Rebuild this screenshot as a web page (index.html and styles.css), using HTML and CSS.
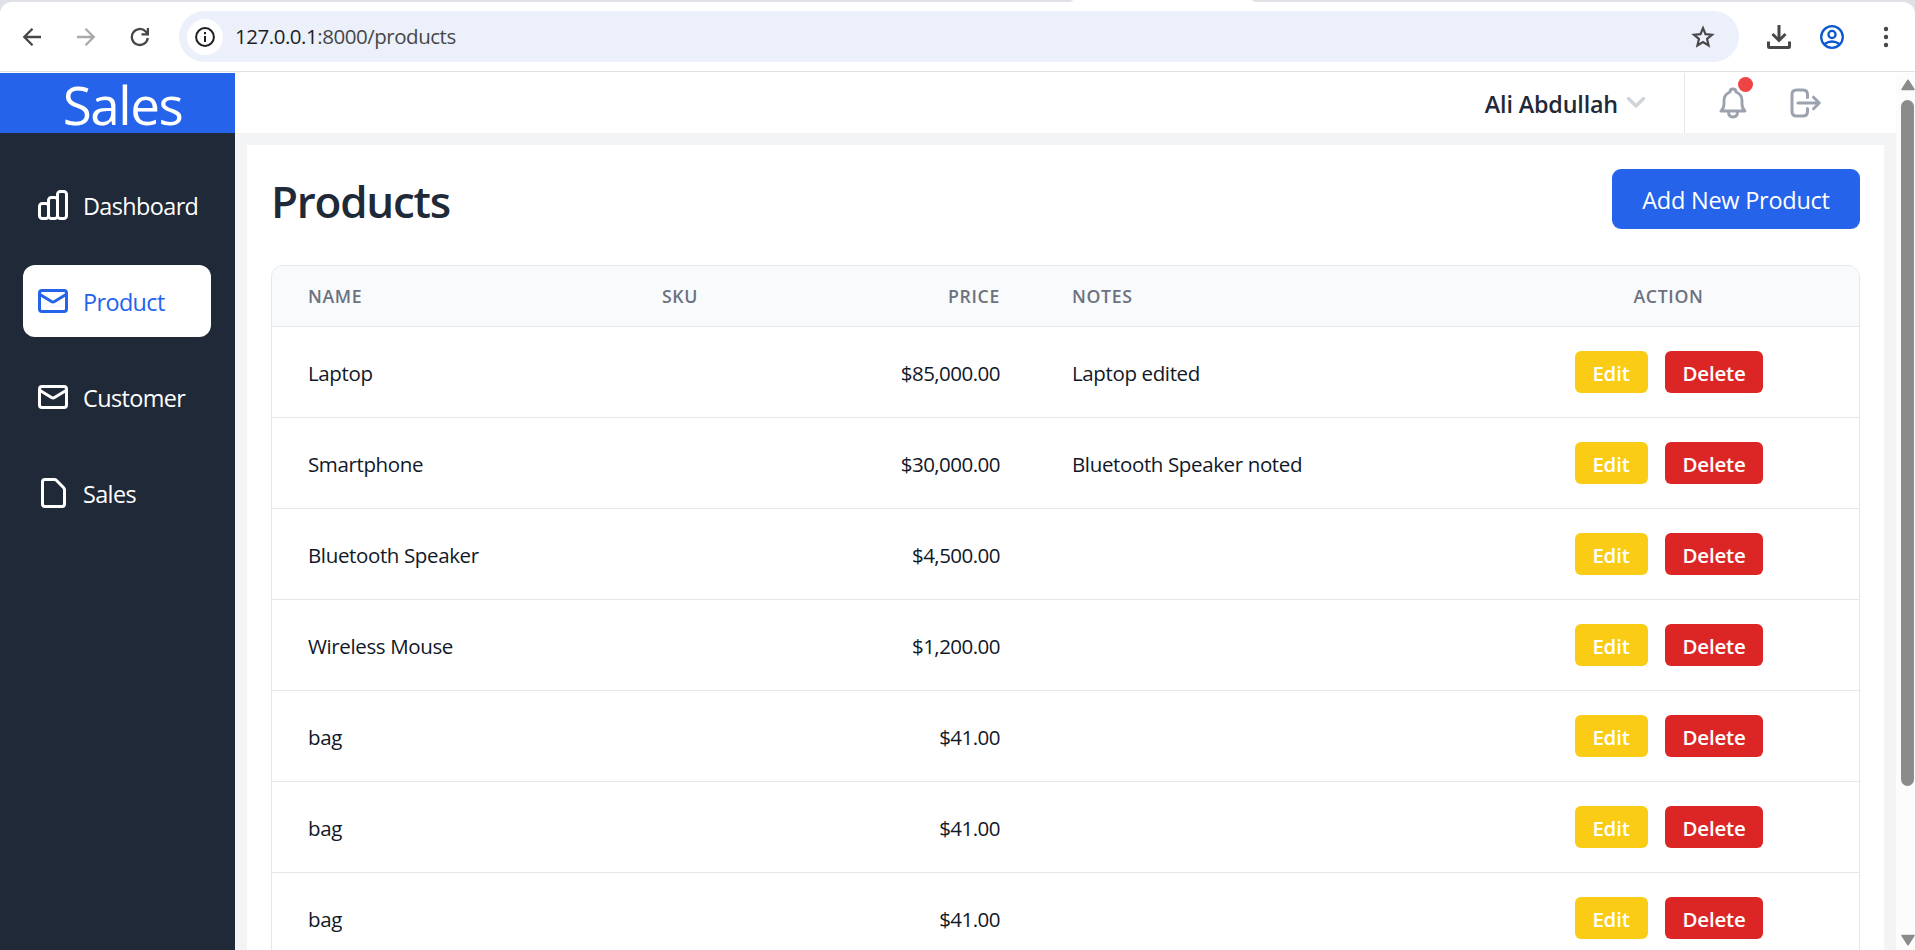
FILE: index.html
```html
<!DOCTYPE html>
<html lang="en">
<head>
<meta charset="utf-8">
<title>Products</title>
<link rel="stylesheet" href="styles.css">
</head>
<body>
<div class="browser">
  <div class="tab-strip"><span class="strip-left"></span><span class="strip-right"></span></div>
  <div class="toolbar">
    <svg class="nav-icon" width="20" height="20" viewBox="0 0 20 20"><path d="M19 10H2.500M10.500 1.800L2.300 10l8.200 8.200" fill="none" stroke="#474747" stroke-width="2.300"/></svg>
    <svg class="nav-icon" width="20" height="20" viewBox="0 0 20 20"><path d="M1 10h16.500M9.500 1.800l8.200 8.200-8.200 8.200" fill="none" stroke="#a9a9a9" stroke-width="2.300"/></svg>
    <svg class="nav-icon" width="20" height="20" viewBox="0 0 20 20"><path d="M17.800 11a8 8 0 1 1-2.300-6.700L17.800 7" fill="none" stroke="#474747" stroke-width="2.300"/><path d="M19 1v7.500h-7.500V6.300h5.300V1z" fill="#474747"/></svg>
    <div class="address">
      <span class="site-info"><svg width="20" height="20" viewBox="0 0 20 20"><circle cx="10" cy="10" r="8.900" fill="none" stroke="#1f1f1f" stroke-width="2"/><path d="M9 9h2v6H9zM9 5h2v2.200H9z" fill="#1f1f1f"/></svg></span>
      <span class="url"><b>127.0.0.1</b>:8000/products</span>
      <svg class="star" width="24" height="24" viewBox="0 0 24 24"><path d="M12 3.200l2.500 6 6.500.55-4.950 4.250 1.500 6.350L12 17l-5.550 3.350 1.500-6.350L3 9.750l6.500-.55z" fill="none" stroke="#474747" stroke-width="2.200"/></svg>
    </div>
    <svg class="download" width="24" height="24" viewBox="0 0 24 24"><path d="M12 0v15M5.500 9l6.500 6.500L18.500 9" fill="none" stroke="#474747" stroke-width="3"/><path d="M1.500 16.500v5q0 1 1 1h19q1 0 1-1v-5" fill="none" stroke="#474747" stroke-width="3"/></svg>
    <svg class="profile" width="24" height="24" viewBox="0 0 24 24"><g fill="none" stroke="#0b57d0" stroke-width="2.300"><circle cx="12" cy="12" r="10.800"/><circle cx="12" cy="9.500" r="3.600"/><path d="M4.500 19q7.500-5 15 0"/></g></svg>
    <svg class="menu" width="6" height="24" viewBox="0 0 6 24"><g fill="#474747"><circle cx="3" cy="4" r="2.200"/><circle cx="3" cy="12" r="2.200"/><circle cx="3" cy="20" r="2.200"/></g></svg>
  </div>
</div>

<div class="app">
  <aside class="sidebar">
    <div class="brand">Sales</div>
    <nav class="nav">
      <a class="nav-item"><svg class="icon" width="30" height="30" viewBox="0 0 30 30"><rect x="1.500" y="13.500" width="9" height="15" rx="2.800"/><rect x="10.500" y="7.500" width="9" height="21" rx="2.800"/><rect x="19.500" y="1.500" width="9" height="27" rx="2.800"/></svg><span>Dashboard</span></a>
      <a class="nav-item active"><svg class="icon" width="30" height="30" viewBox="0 0 30 30"><rect x="1.500" y="4.500" width="27" height="21" rx="2.500"/><path d="M2 8.500l11.500 7q1.500.9 3 0L28 8.500"/></svg><span>Product</span></a>
      <a class="nav-item"><svg class="icon" width="30" height="30" viewBox="0 0 30 30"><rect x="1.500" y="4.500" width="27" height="21" rx="2.500"/><path d="M2 8.500l11.500 7q1.500.9 3 0L28 8.500"/></svg><span>Customer</span></a>
      <a class="nav-item"><svg class="icon" width="30" height="30" viewBox="0 0 30 30"><path d="M7 1.500h9.300q1.200 0 2 .8l7.400 7.400q.8.800.8 2V26q0 2.500-2.500 2.500H7q-2.500 0-2.500-2.500V4Q4.500 1.500 7 1.500z"/></svg><span>Sales</span></a>
    </nav>
  </aside>

  <div class="content">
    <header class="topbar">
      <span class="user">Ali Abdullah</span>
      <svg class="chevron" width="20" height="14" viewBox="0 0 20 14"><path d="M2.500 2.500l7.500 7.500 7.500-7.500" fill="none" stroke="#d1d5db" stroke-width="3.400" stroke-linecap="round" stroke-linejoin="round"/></svg>
      <div class="actions">
        <span class="bell">
          <svg width="28" height="32" viewBox="0 0 28 32"><g fill="none" stroke="#9ca3af" stroke-width="2.900" stroke-linecap="round" stroke-linejoin="round"><path d="M2 24h24q-3-2.500-3-7v-3.500q0-6-6-8.500Q17 2 14 2t-3 3q-6 2.500-6 8.500V17q0 4.500-3 7z"/><path d="M9.500 24.500q0 5.500 4.500 5.500t4.500-5.500"/></g></svg>
          <i class="dot"></i>
        </span>
        <svg width="32" height="30" viewBox="0 0 32 30"><g fill="none" stroke="#9ca3af" stroke-width="3" stroke-linecap="round" stroke-linejoin="round"><path d="M17.500 9.500V6.500q0-4.500-4.500-4.500H6.500Q2 2 2 6.500v17Q2 28 6.500 28H13q4.500 0 4.500-4.500v-3M8 15h21M23.500 9.200l5.800 5.800-5.800 5.800"/></g></svg>
      </div>
    </header>

    <main class="card">
      <div class="card-head">
        <h1>Products</h1>
        <button class="add">Add New Product</button>
      </div>
      <div class="table">
        <div class="row head"><span>NAME</span><span>SKU</span><span class="price">PRICE</span><span>NOTES</span><span class="act">ACTION</span></div>
        <div class="row"><span>Laptop</span><span></span><span class="price">$85,000.00</span><span>Laptop edited</span><span class="act"><button class="edit">Edit</button><button class="delete">Delete</button></span></div>
        <div class="row"><span>Smartphone</span><span></span><span class="price">$30,000.00</span><span>Bluetooth Speaker noted</span><span class="act"><button class="edit">Edit</button><button class="delete">Delete</button></span></div>
        <div class="row"><span>Bluetooth Speaker</span><span></span><span class="price">$4,500.00</span><span></span><span class="act"><button class="edit">Edit</button><button class="delete">Delete</button></span></div>
        <div class="row"><span>Wireless Mouse</span><span></span><span class="price">$1,200.00</span><span></span><span class="act"><button class="edit">Edit</button><button class="delete">Delete</button></span></div>
        <div class="row"><span>bag</span><span></span><span class="price">$41.00</span><span></span><span class="act"><button class="edit">Edit</button><button class="delete">Delete</button></span></div>
        <div class="row"><span>bag</span><span></span><span class="price">$41.00</span><span></span><span class="act"><button class="edit">Edit</button><button class="delete">Delete</button></span></div>
        <div class="row"><span>bag</span><span></span><span class="price">$41.00</span><span></span><span class="act"><button class="edit">Edit</button><button class="delete">Delete</button></span></div>
      </div>
    </main>
  </div>

  <div class="scrollbar">
    <svg width="14" height="12" viewBox="0 0 14 12"><path d="M7 1.200L13 10.500H1z" fill="#8b8b8b" stroke="#8b8b8b" stroke-width="1.500" stroke-linejoin="round"/></svg>
    <div class="thumb"></div>
    <svg class="down" width="14" height="12" viewBox="0 0 14 12"><path d="M7 10.800L13 1.500H1z" fill="#8b8b8b" stroke="#8b8b8b" stroke-width="1.500" stroke-linejoin="round"/></svg>
  </div>
</div>
</body>
</html>
```
FILE: styles.css
```css
* { box-sizing: border-box; }

body {
  margin: 0;
  height: 950px;
  overflow: hidden;
  font-family: "Open Sans", "Noto Sans", sans-serif;
  font-size: 20.500px;
  letter-spacing: -0.370px;
  color: #111827;
  background: #fff;
}

button { border: 0; font: inherit; color: #fff; padding: 2px 0 0; }
svg { display: block; flex: none; }

/* Browser toolbar */
.browser { height: 73px; background: linear-gradient(#dee1e6 0 12px, #fff 12px); }
.tab-strip { height: 2px; display: flex; justify-content: space-between; background: #fff; }
.strip-left { width: 1073px; background: #dee1e6; border-bottom-right-radius: 6px 2px; }
.strip-right { width: 663px; background: #dee1e6; border-bottom-left-radius: 6px 2px; }
.toolbar {
  height: 70px;
  display: flex;
  align-items: center;
  padding-left: 22px;
  background: #fff;
  border-bottom: 1px solid #dfe1e5;
  border-radius: 12px 12px 0 0;
}
.nav-icon { margin-right: 34px; }
.nav-icon + .nav-icon + .nav-icon { margin-right: 29px; }
.address {
  width: 1560px;
  height: 51px;
  display: flex;
  align-items: center;
  padding: 0 24px 0 8px;
  border-radius: 26px;
  background: #ebf0fa;
}
.site-info {
  width: 36px;
  height: 36px;
  display: grid;
  place-items: center;
  border-radius: 50%;
  background: #fff;
}
.url { margin-left: 12px; padding-bottom: 2px; letter-spacing: -0.470px; color: #474747; }
.url b { font-weight: 400; color: #1f1f1f; }
.star { margin-left: auto; }
.download { margin-left: 28px; }
.profile { margin-left: 29px; }
.menu { margin-left: 39px; }

/* Application shell */
.app { height: 877px; display: flex; overflow: hidden; }

.sidebar { width: 235px; flex: none; background: #1f2937; color: #fff; }
.brand {
  height: 60px;
  padding: 3px 0 0 10px;
  background: #2563eb;
  font-size: 53px;
  line-height: 57px;
  letter-spacing: -1.500px;
  text-align: center;
}
.nav { display: grid; gap: 24px; padding: 36px 24px 0 23px; }
.nav-item {
  height: 72px;
  display: flex;
  align-items: center;
  gap: 15px;
  padding-left: 15px;
  border-radius: 12px;
  font-size: 23.400px;
  letter-spacing: -0.600px;
}
.nav-item span { padding-top: 2px; }
.nav-item.active { background: #fff; color: #2563eb; }
.icon { fill: none; stroke: currentColor; stroke-width: 3; stroke-linejoin: round; }

.content { flex: 1; min-width: 0; background: #f3f4f6; }
.topbar {
  height: 60px;
  display: flex;
  align-items: center;
  justify-content: flex-end;
  background: #fff;
}
.user { font-size: 23.300px; font-weight: 600; letter-spacing: -0.150px; color: #1f2937; padding-top: 1px; }
.chevron { margin: 0 38px 0 8px; }
.actions {
  width: 212px;
  height: 60px;
  display: flex;
  align-items: center;
  gap: 43px;
  padding-left: 34px;
  border-left: 1px solid #e5e7eb;
}
.bell { position: relative; }
.dot {
  position: absolute;
  top: -10px;
  right: -6px;
  width: 15px;
  height: 15px;
  border-radius: 50%;
  background: #ef4444;
}

/* Products card */
.card { margin: 12px 12px 0; padding: 24px; height: 900px; background: #fff; }
.card-head { height: 60px; display: flex; align-items: center; justify-content: space-between; margin-bottom: 36px; }
h1 { margin: 0; padding-top: 4px; font-size: 44px; line-height: 56px; font-weight: 600; letter-spacing: -1.250px; color: #1f2937; }
.add { width: 248px; height: 60px; border-radius: 9px; background: #2563eb; font-size: 23.500px; letter-spacing: -0.250px; }

.table { border: 1px solid #e5e7eb; border-radius: 12px 12px 0 0; overflow: hidden; }
.row {
  height: 91px;
  display: grid;
  grid-template-columns: 354px 196px 214px 442px 1fr;
  align-items: center;
  border-bottom: 1px solid #e5e7eb;
}
.row > span { padding: 2px 36px 0; white-space: nowrap; }
.row .price { text-align: right; letter-spacing: -0.520px; }
.row > .act { display: flex; justify-content: center; gap: 17px; padding-top: 0; }
.row.head {
  height: 61px;
  background: #f9fafb;
  color: #6b7280;
  font-size: 17.700px;
  font-weight: 600;
  letter-spacing: 0.650px;
}
.row.head > span { padding-top: 0; letter-spacing: inherit; }
.edit, .delete { height: 42px; border-radius: 6px; font-weight: 600; letter-spacing: -0.200px; }
.edit { width: 73px; background: #facc15; }
.delete { width: 98px; padding-left: 1px; background: #dc2626; }

/* Window scrollbar */
.scrollbar { width: 19px; flex: none; padding: 6px 0 0 5px; background: #fcfcfc; }
.thumb { width: 13px; height: 686px; margin: 9px 0 148px; border-radius: 7px; background: #8b8b8b; }
```
